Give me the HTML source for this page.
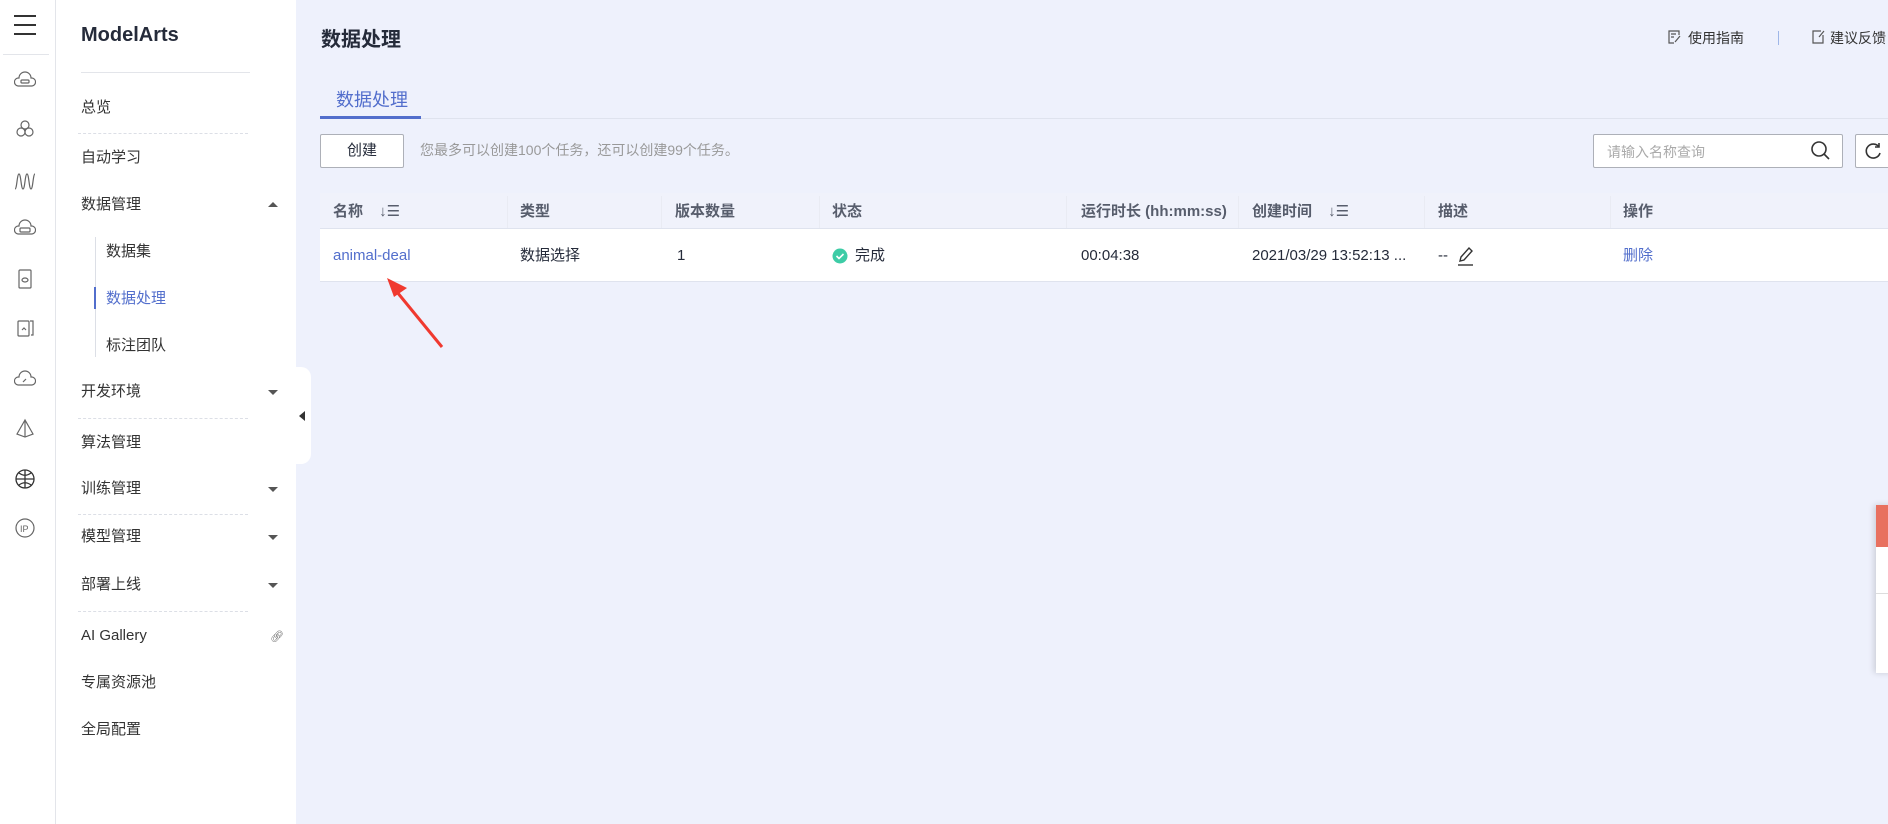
<!DOCTYPE html>
<html><head><meta charset="utf-8"><style>
*{margin:0;padding:0;box-sizing:border-box}
body{width:1888px;height:824px;overflow:hidden;background:#eef1fc;font-family:"Liberation Sans","Noto Sans CJK SC",sans-serif;color:#252b3a;position:relative;line-height:20px}
.abs{position:absolute}
.rail{left:0;top:0;width:56px;height:824px;background:#fff;border-right:1px solid #e3e5ea}
.side{left:56px;top:0;width:240px;height:824px;background:#fff}
.mi{position:absolute;left:81px;font-size:15px;color:#333;line-height:20px}
.dash{position:absolute;left:78px;width:170px;border-top:1px dashed #dcdfe6}
.caret{position:absolute;left:268px;width:0;height:0;border-left:5px solid transparent;border-right:5px solid transparent}
.th{position:absolute;top:201px;font-size:15px;color:#575d6c;font-weight:bold;line-height:22px;white-space:nowrap}
.td{position:absolute;top:245px;font-size:15px;color:#252b3a;line-height:22px;white-space:nowrap}
.vd{position:absolute;top:196px;height:32px;border-left:1px solid #e9ebf3}
.ic{position:absolute;left:14px}
</style></head><body>
<div class="abs rail">
 <div class="abs" style="left:14px;top:15px;width:22px;height:2px;background:#333"></div>
 <div class="abs" style="left:14px;top:24px;width:22px;height:2px;background:#333"></div>
 <div class="abs" style="left:14px;top:33px;width:22px;height:2px;background:#333"></div>
 <div class="abs" style="left:3px;top:54px;width:46px;border-top:1px solid #e3e5ea"></div>
 <svg class="ic" style="top:71px" width="22" height="20" fill="none" stroke="#666" stroke-width="1.2"><path d="M4 15a4 4 0 0 1 1-8 6 6 0 0 1 12 0 4 4 0 0 1 1 8z"/><rect x="7" y="9" width="8" height="3" rx="1"/></svg>
 <svg class="ic" style="top:119px" width="22" height="20" fill="none" stroke="#666" stroke-width="1.2"><circle cx="11" cy="6" r="4"/><circle cx="7" cy="13" r="4"/><circle cx="15" cy="13" r="4"/></svg>
 <svg class="ic" style="top:171px" width="22" height="20" fill="none" stroke="#666" stroke-width="1.2"><path d="M1 18C3 18 3 3 5 3s2 15 4 15 2-15 4-15 2 15 4 15 2-15 4-15"/></svg>
 <svg class="ic" style="top:219px" width="22" height="20" fill="none" stroke="#666" stroke-width="1.2"><path d="M4 15a4 4 0 0 1 1-8 6 6 0 0 1 12 0 4 4 0 0 1 1 8z"/><rect x="6" y="9" width="10" height="4" rx="1"/></svg>
 <svg class="ic" style="top:268px" width="22" height="22" fill="none" stroke="#666" stroke-width="1.2"><rect x="5" y="2" width="12" height="18" rx="1"/><ellipse cx="11" cy="12" rx="3" ry="2"/></svg>
 <svg class="ic" style="top:317px" width="22" height="22" fill="none" stroke="#666" stroke-width="1.2"><rect x="4" y="4" width="11" height="15" rx="1"/><path d="M16 4h3v14h-2"/><path d="M8 13l2-2 2 2"/></svg>
 <svg class="ic" style="top:370px" width="22" height="20" fill="none" stroke="#666" stroke-width="1.2"><path d="M4 15a4 4 0 0 1 1-8 6 6 0 0 1 12 0 4 4 0 0 1 1 8z"/><path d="M9 12l3-3"/></svg>
 <svg class="ic" style="top:418px" width="22" height="22" fill="none" stroke="#666" stroke-width="1.2"><path d="M11 2L3 16l8 3 8-3z M11 2v17"/></svg>
 <svg class="ic" style="top:468px" width="24" height="24" fill="none" stroke="#333" stroke-width="1.3"><circle cx="11" cy="11" r="9"/><path d="M2 11h18M11 2v18M5 5c4 3 8 3 12 0M5 17c4-3 8-3 12 0"/></svg>
 <svg class="ic" style="top:517px" width="22" height="22" fill="none" stroke="#666" stroke-width="1.2"><circle cx="11" cy="11" r="9"/><text x="6" y="15" font-size="9" fill="#666" stroke="none" font-family="Liberation Sans">IP</text></svg>
</div>
<div class="abs side"></div>
<div class="abs" style="left:81px;top:23px;font-size:20px;font-weight:bold;color:#252b3a;line-height:24px">ModelArts</div>
<div class="abs" style="left:81px;top:72px;width:169px;border-top:1px solid #e3e5ea"></div>
<div class="mi" style="top:98px">总览</div>
<div class="dash" style="top:133px"></div>
<div class="mi" style="top:148px">自动学习</div>
<div class="mi" style="top:195px">数据管理</div>
<div class="caret" style="top:202px;border-bottom:5px solid #555"></div>
<div class="abs" style="left:95px;top:237px;height:120px;border-left:1px solid #dcdfe6"></div>
<div class="abs" style="left:94px;top:287px;height:22px;border-left:2px solid #526ecc"></div>
<div class="mi" style="left:106px;top:242px">数据集</div>
<div class="mi" style="left:106px;top:289px;color:#526ecc">数据处理</div>
<div class="mi" style="left:106px;top:336px">标注团队</div>
<div class="mi" style="top:382px">开发环境</div>
<div class="caret" style="top:390px;border-top:5px solid #555"></div>
<div class="dash" style="top:418px"></div>
<div class="mi" style="top:433px">算法管理</div>
<div class="mi" style="top:479px">训练管理</div>
<div class="caret" style="top:487px;border-top:5px solid #555"></div>
<div class="dash" style="top:514px"></div>
<div class="mi" style="top:527px">模型管理</div>
<div class="caret" style="top:535px;border-top:5px solid #555"></div>
<div class="mi" style="top:575px">部署上线</div>
<div class="caret" style="top:583px;border-top:5px solid #555"></div>
<div class="dash" style="top:611px"></div>
<div class="mi" style="top:626px">AI Gallery</div>
<div class="abs" style="left:270px;top:627px;font-size:11px;color:#666">&#x1F517;&#xFE0E;</div>
<div class="mi" style="top:673px">专属资源池</div>
<div class="mi" style="top:720px">全局配置</div>
<div class="abs" style="left:296px;top:367px;width:15px;height:97px;background:#fff;border-radius:0 10px 10px 0"></div>
<div class="abs" style="left:299px;top:411px;width:0;height:0;border-top:5px solid transparent;border-bottom:5px solid transparent;border-right:6px solid #333"></div>

<div class="abs" style="left:321px;top:28px;font-size:20px;font-weight:bold;color:#252b3a;line-height:24px">数据处理</div>
<svg class="abs" style="left:1668px;top:30px" width="14" height="14" fill="none" stroke="#555" stroke-width="1.2"><path d="M11 5V1H1v12h5"/><path d="M3 4h5M3 7h3M7 12l5-6"/></svg>
<div class="abs" style="left:1688px;top:28px;font-size:14px;color:#333">使用指南</div>
<div class="abs" style="left:1778px;top:31px;height:14px;border-left:1px solid #9fb7e8"></div>
<svg class="abs" style="left:1812px;top:30px" width="14" height="14" fill="none" stroke="#555" stroke-width="1.2"><path d="M9 1H1v12h10V5"/><path d="M7 7l5-6"/></svg>
<div class="abs" style="left:1830px;top:28px;font-size:14px;color:#333;white-space:nowrap">建议反馈</div>

<div class="abs" style="left:336px;top:88px;font-size:18px;color:#526ecc;line-height:24px">数据处理</div>
<div class="abs" style="left:320px;top:118px;width:1568px;border-top:1px solid #dfe3ee"></div>
<div class="abs" style="left:320px;top:116px;width:101px;height:3px;background:#526ecc"></div>

<div class="abs" style="left:320px;top:134px;width:84px;height:34px;background:#fff;border:1px solid #adb0b8;border-radius:2px;font-size:15px;text-align:center;line-height:32px;color:#252b3a">创建</div>
<div class="abs" style="left:420px;top:140px;font-size:14px;color:#999">您最多可以创建100个任务，还可以创建99个任务。</div>
<div class="abs" style="left:1593px;top:134px;width:250px;height:34px;background:#fff;border:1px solid #adb0b8;border-radius:2px"></div>
<div class="abs" style="left:1607px;top:142px;font-size:14px;color:#aaa">请输入名称查询</div>
<svg class="abs" style="left:1810px;top:140px" width="22" height="22" fill="none" stroke="#333" stroke-width="1.6"><circle cx="9" cy="9" r="7"/><path d="M14 14l5 5"/></svg>
<div class="abs" style="left:1855px;top:134px;width:40px;height:34px;background:#fff;border:1px solid #adb0b8;border-radius:2px"></div>
<svg class="abs" style="left:1863px;top:141px" width="20" height="20" fill="none" stroke="#333" stroke-width="1.6"><path d="M16 6A7 7 0 1 0 17 12"/><path d="M16 2v4h-4"/></svg>

<div class="abs" style="left:320px;top:193px;width:1568px;height:35px;background:#f0f2fb"></div>
<div class="abs" style="left:320px;top:228px;width:1568px;height:54px;background:#fff;border-top:1px solid #dfe3ee;border-bottom:1px solid #dfe3ee"></div>
<div class="vd" style="left:507px"></div><div class="vd" style="left:661px"></div><div class="vd" style="left:819px"></div><div class="vd" style="left:1066px"></div><div class="vd" style="left:1238px"></div><div class="vd" style="left:1424px"></div><div class="vd" style="left:1610px"></div>
<div class="th" style="left:333px">名称 <span style="font-weight:normal;margin-left:12px">↓☰</span></div>
<div class="th" style="left:520px">类型</div>
<div class="th" style="left:675px">版本数量</div>
<div class="th" style="left:832px">状态</div>
<div class="th" style="left:1081px">运行时长 (hh:mm:ss)</div>
<div class="th" style="left:1252px">创建时间 <span style="font-weight:normal;margin-left:12px">↓☰</span></div>
<div class="th" style="left:1438px">描述</div>
<div class="th" style="left:1623px">操作</div>
<div class="td" style="left:333px;color:#526ecc">animal-deal</div>
<div class="td" style="left:520px">数据选择</div>
<div class="td" style="left:677px">1</div>
<svg class="abs" style="left:832px;top:248px" width="16" height="16"><circle cx="8" cy="8" r="7.5" fill="#3dcca6"/><path d="M4.5 8l2.5 2.5 4.5-4.5" stroke="#fff" stroke-width="1.6" fill="none"/></svg>
<div class="td" style="left:855px">完成</div>
<div class="td" style="left:1081px">00:04:38</div>
<div class="td" style="left:1252px">2021/03/29 13:52:13 ...</div>
<div class="td" style="left:1438px">--</div>
<svg class="abs" style="left:1456px;top:245px" width="20" height="22" fill="none" stroke="#333" stroke-width="1.4"><path d="M4 16l1-4 8-9 3 3-8 9z"/><path d="M2 20h15"/></svg>
<div class="td" style="left:1623px;color:#526ecc">删除</div>

<svg class="abs" style="left:380px;top:270px" width="70" height="85"><path d="M62 77L17 22" stroke="#f0392f" stroke-width="3"/><path d="M7 8l20 10-13 9z" fill="#f0392f"/></svg>

<div class="abs" style="left:1876px;top:505px;width:20px;height:168px;background:#fff;box-shadow:-2px 0 6px rgba(0,0,0,.15)"></div>
<div class="abs" style="left:1876px;top:505px;width:20px;height:42px;background:#e8705f"></div>
<div class="abs" style="left:1876px;top:593px;width:20px;border-top:1px solid #ddd"></div>
</body></html>
